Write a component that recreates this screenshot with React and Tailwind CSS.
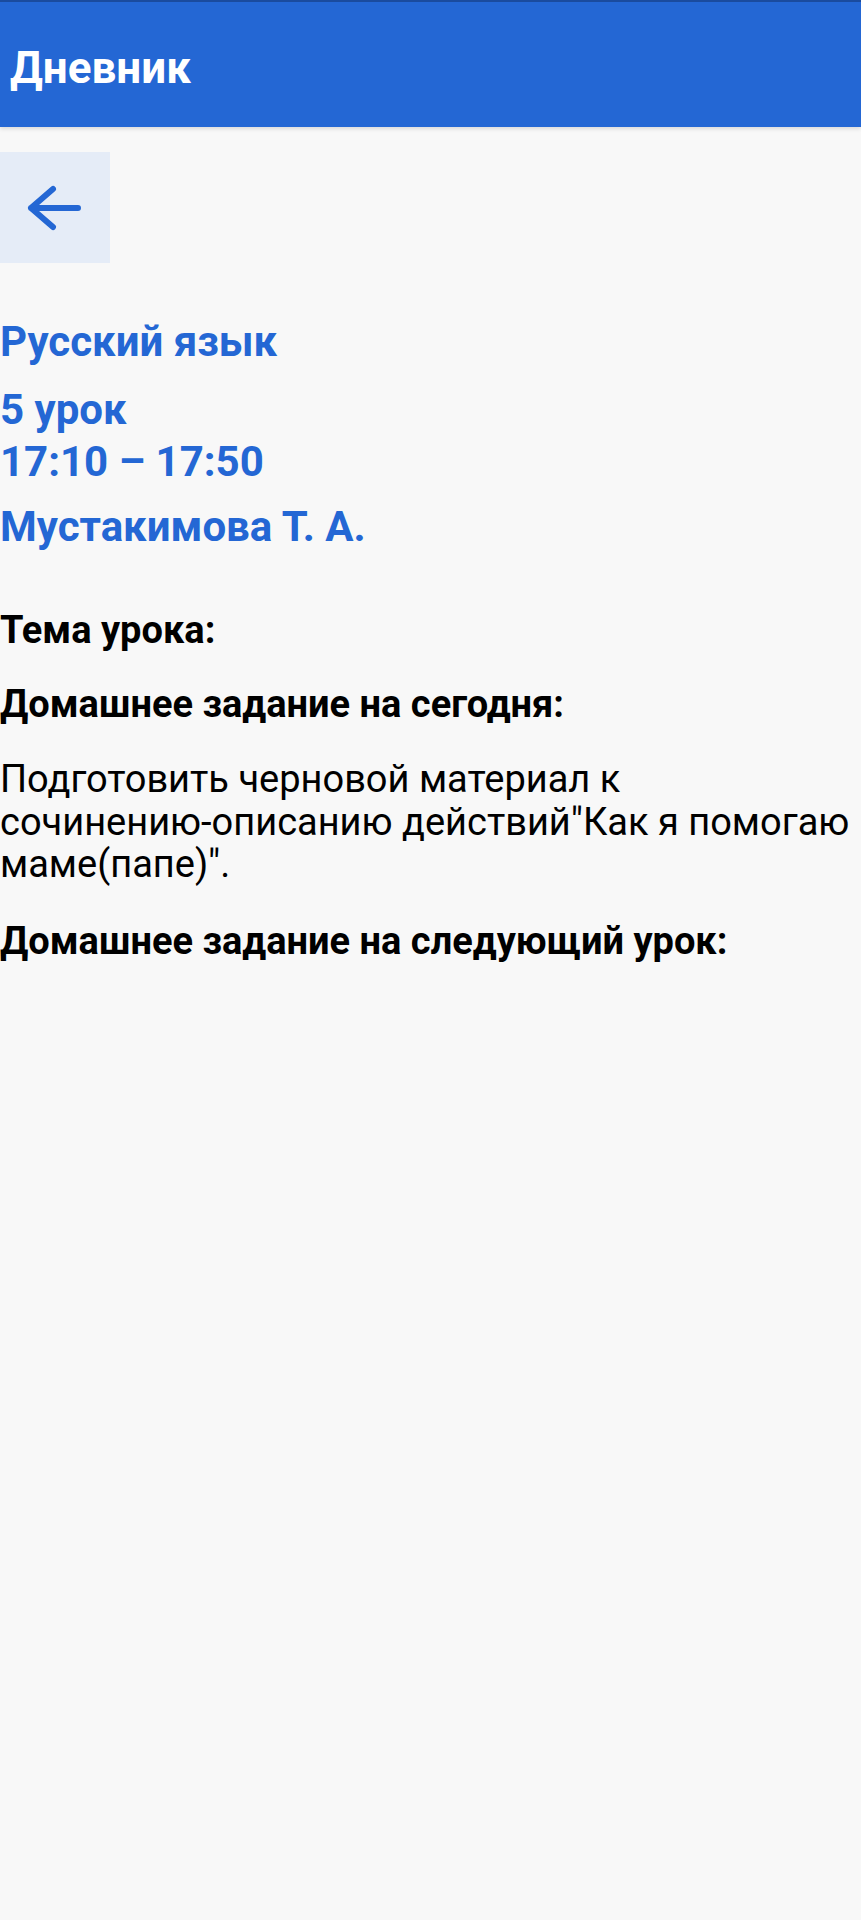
import React from "react";

const BackArrow = () => (
  <svg width="110" height="111" viewBox="0 0 110 111" fill="none">
    <path
      d="M78 56H31M53 37L31 56L53 75"
      stroke="#2467d4"
      strokeWidth="6"
      strokeLinecap="round"
      strokeLinejoin="round"
    />
  </svg>
);

export default function App() {
  return (
    <div className="min-h-[1920px] w-full bg-[#f8f8f8] font-['Roboto',sans-serif]">
      <header className="h-[127px] border-t-2 border-[#1a4b9e] bg-[#2467d4] shadow-[0_2px_4px_rgba(0,0,0,0.12)] flex items-center pl-[10px] pt-[6px]">
        <h1 className="text-[44px] font-bold text-white leading-none">Дневник</h1>
      </header>

      <main>
        <button className="mt-[25px] w-[110px] h-[111px] bg-[#e5ecf7] flex items-center justify-center">
          <BackArrow />
        </button>

        <section className="mt-[53px] text-[42px] leading-[52px] font-bold text-[#2467d4]">
          <p className="mb-4">Русский язык</p>
          <p className="mb-[13px]">
            5 урок
            <br />
            17:10 – 17:50
          </p>
          <p>Мустакимова Т. А.</p>
        </section>

        <section className="mt-[56px] text-[38px] leading-[43px] text-black">
          <h2 className="font-bold">Тема урока:</h2>
          <h2 className="font-bold mt-[31px]">Домашнее задание на сегодня:</h2>
          <p className="mt-[32px] leading-[42.5px]">
            Подготовить черновой материал к{" "}
            <span className="whitespace-nowrap">сочинению-описанию</span> действий"Как я помогаю маме(папе)".
          </p>
          <h2 className="font-bold mt-[34px]">Домашнее задание на следующий урок:</h2>
        </section>
      </main>
    </div>
  );
}
